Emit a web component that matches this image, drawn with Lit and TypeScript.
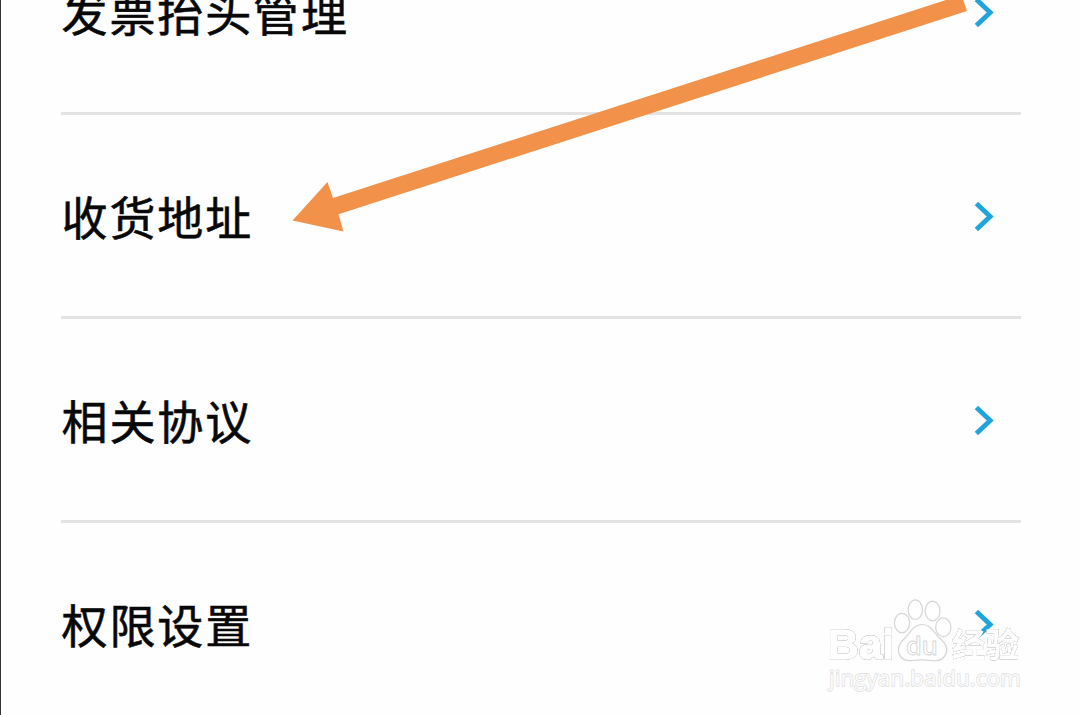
import { LitElement, html, css } from "lit";
import { customElement, property } from "lit/decorators.js";

@customElement("menu-row")
class MenuRow extends LitElement {
  @property({ type: String }) label = "";

  static styles = css`
    :host {
      display: flex;
      align-items: center;
      justify-content: space-between;
      box-sizing: border-box;
      height: 204px;
      flex: none;
      border-bottom: 3px solid #e3e3e4;
      padding: 3px 25px 0 0;
    }

    .label {
      font-size: 46px;
      line-height: 68px;
      padding: 0 0 5px 0.5px;
      letter-spacing: 1.9px;
      color: #080808;
      -webkit-text-stroke: 0.6px #080808;
      white-space: nowrap;
    }

    .chevron {
      display: block;
      width: 24px;
      height: 34px;
    }
  `;

  render() {
    return html`
      <span class="label">${this.label}</span>
      <svg class="chevron" viewBox="0 0 24 34">
        <path d="M4.4 3.4 L18.2 16.5 L4.4 29.6" fill="none" stroke="#1fa5da" stroke-width="4.8" />
      </svg>
    `;
  }
}

@customElement("baidu-mark")
class BaiduMark extends LitElement {
  static styles = css`
    :host {
      display: block;
    }

    .mark {
      display: block;
      width: 210px;
      height: 105px;
    }

    .shape {
      fill: #fff;
      fill-opacity: 0.9;
      stroke: #d6d6d6;
      stroke-width: 1.2px;
      stroke-linejoin: round;
    }

    /* fat white letters with a thin grey rim */
    .outlined {
      fill: #fff;
      stroke: #fff;
      stroke-width: 1.4px;
      stroke-linejoin: round;
      filter: drop-shadow(0 0 0.7px #909090) drop-shadow(0 0 0.4px #c8c8c8);
    }

    .latin {
      font-family: "Liberation Sans", sans-serif;
      font-weight: bold;
    }

    .du {
      font-family: "Open Sans", sans-serif;
      font-weight: 600;
      stroke-width: 0.9px;
    }

    .cjk {
      font-family: "Noto Sans CJK SC", sans-serif;
      font-weight: bold;
      stroke-width: 0.6px;
    }

    .site {
      font-family: "Open Sans", sans-serif;
      stroke: #dcdcdc;
      stroke-width: 1.3px;
      paint-order: stroke;
    }
  `;

  render() {
    return html`
      <svg class="mark" viewBox="820 595 210 105">
        <ellipse class="shape" cx="902" cy="623" rx="7.6" ry="9.6" />
        <ellipse class="shape" cx="915.3" cy="609.7" rx="7.2" ry="9.8" />
        <ellipse class="shape" cx="932.6" cy="611" rx="7.4" ry="9.8" />
        <ellipse class="shape" cx="943.3" cy="627.3" rx="7.6" ry="9.4" />
        <path
          class="shape"
          d="M922 624.5 C930 624.5 933 631 938 636.5 C944 642 948 646 946.5 652 C945 659 939 661.5 931 660.5 C924 659.5 920 659.5 913 660.5 C905 661.5 900 659 898.5 652 C897.5 646 901 642 906 637 C911 631 914 624.5 922 624.5 Z"
        />
        <text class="outlined latin" x="828" y="658.5" font-size="42" textLength="66" lengthAdjust="spacingAndGlyphs">Bai</text>
        <text class="shape du" x="906" y="655" font-size="25" textLength="32" lengthAdjust="spacingAndGlyphs">du</text>
        <text class="outlined cjk" x="952" y="657" font-size="33" textLength="67" lengthAdjust="spacingAndGlyphs">经验</text>
        <text class="shape site" x="829" y="685.5" font-size="22" textLength="192" lengthAdjust="spacingAndGlyphs">jingyan.baidu.com</text>
      </svg>
    `;
  }
}

@customElement("app-root")
class AppRoot extends LitElement {
  static properties = {
    items: { state: true },
  };

  declare items: string[];

  static styles = css`
    :host {
      display: block;
      position: relative;
      box-sizing: border-box;
      width: 1080px;
      height: 715px;
      overflow: hidden;
      background: #fefefe;
      border-left: 1px solid #333336;
      font-family: "Noto Sans CJK SC", sans-serif;
    }

    /* the list is scrolled, so the first row is cut off at the top */
    .list {
      display: flex;
      flex-direction: column;
      margin-top: -89px;
      padding: 0 59px 0 60px;
    }

    .arrow {
      position: absolute;
      top: 0;
      left: -1px;
      width: 1080px;
      height: 715px;
    }

    .watermark {
      position: absolute;
      left: 819px;
      top: 595px;
    }
  `;

  constructor() {
    super();
    this.items = ["发票抬头管理", "收货地址", "相关协议", "权限设置"];
  }

  render() {
    return html`
      <div class="list">
        ${this.items.map((item) => html`<menu-row label=${item}></menu-row>`)}
      </div>

      <svg class="arrow" viewBox="0 0 1080 715">
        <polygon
          points="292.5,220.5 327.5,182 333,198 961.5,-5 967,11 338.5,214.3 343.5,231.5"
          fill="#f1914a"
        />
      </svg>

      <baidu-mark class="watermark"></baidu-mark>
    `;
  }
}
